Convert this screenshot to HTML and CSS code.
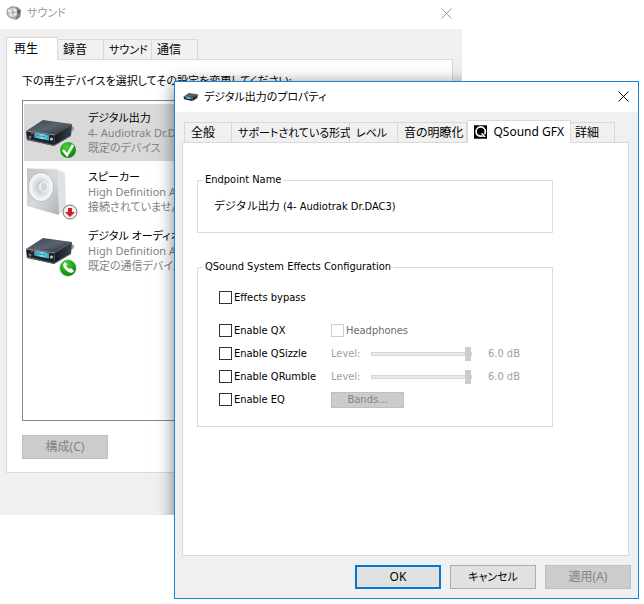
FILE: index.html
```
<!DOCTYPE html>
<html lang="ja">
<head>
<meta charset="UTF-8">
<title>サウンド</title>
<link rel="stylesheet" href="styles.css">
</head>
<body>
<svg class="defs" aria-hidden="true">
    <defs>
        <linearGradient id="top" x1="0" y1="0" x2="1" y2="1">
            <stop offset="0" stop-color="#3a424c"/>
            <stop offset=".5" stop-color="#59636e"/>
            <stop offset="1" stop-color="#252b33"/>
        </linearGradient>
        <linearGradient id="side" x1="0" y1="0" x2="1" y2="0">
            <stop offset="0" stop-color="#11161d"/>
            <stop offset="1" stop-color="#39424d"/>
        </linearGradient>
        <linearGradient id="lcd" x1="0" y1="0" x2="1" y2="0">
            <stop offset="0" stop-color="#2b8fae"/>
            <stop offset=".5" stop-color="#7fe3ee"/>
            <stop offset="1" stop-color="#2da6bd"/>
        </linearGradient>
        <radialGradient id="green" cx=".4" cy=".3" r=".8">
            <stop offset="0" stop-color="#4fd03c"/>
            <stop offset=".6" stop-color="#1b9c18"/>
            <stop offset="1" stop-color="#0b6d0c"/>
        </radialGradient>
        <linearGradient id="box" x1="0" y1="0" x2="1" y2="1">
            <stop offset="0" stop-color="#c0c6cb"/>
            <stop offset=".5" stop-color="#d6dadd"/>
            <stop offset="1" stop-color="#adb3b8"/>
        </linearGradient>
        <radialGradient id="cone">
            <stop offset="0" stop-color="#ffffff"/>
            <stop offset=".35" stop-color="#c9cdd1"/>
            <stop offset="1" stop-color="#f2f3f5"/>
        </radialGradient>
    </defs>
    <symbol id="dac" viewBox="0 14 52 30">
        <path d="M47 22l3 1v3l-3 2z" fill="#9a9fa5"/>
        <path d="M2 27L19 16l29 4-17 11z" fill="url(#top)"/>
        <path d="M31 31l17-11-1 12-17 10z" fill="url(#side)"/>
        <path d="M2 27l29 4-1 11-27-6z" fill="#1c222b"/>
        <path d="M2 27l29 4" stroke="#8a949e" stroke-width=".8"/>
        <path d="M3 35l27 6.500M30 41.500L47 31.500" stroke="#737d88" stroke-width=".8" fill="none"/>
        <path d="M10 28.500l15 2.500v5.500L10 33.500z" fill="url(#lcd)"/>
        <path d="M13 31.500l8 1.300" stroke="#1e7c96" stroke-width=".8"/>
        <circle cx="8" cy="29" r="1.300" fill="#e02a20"/>
        <circle cx="6" cy="33" r="1.500" fill="#6f7984"/>
        <circle cx="27.500" cy="35" r="1.600" fill="#b8c0c8"/>
    </symbol>
</svg>

<div class="window sound">
    <header class="titlebar">
        <svg class="title-icon" viewBox="0 0 16 16" width="16" height="16">
            <path d="M1 4l5-3 6 1 3 4-1 6-5 3-6-3-2-4z" fill="#a9afb5"/>
            <path d="M10 2l5 3-1 7-4 3z" fill="#777e86"/>
            <circle cx="6.500" cy="7.500" r="5.500" fill="#c9ced3" stroke="#8c939a"/>
            <path d="M2 5l8 5M4 11l6-7" stroke="#eef0f2" stroke-width="1.500"/>
            <circle cx="7" cy="7.500" r="1.300" fill="#8b949d"/>
            <path d="M11 5l3 2-2 2z" fill="#3f4a58"/>
        </svg>
        <h1 class="title kana">サウンド</h1>
        <button class="close" aria-label="閉じる">
            <svg viewBox="0 0 11 11" width="11" height="11"><path d="M.5.5l10 10M10.500.5l-10 10" stroke="currentColor"/></svg>
        </button>
    </header>
    <div class="client">
        <div class="tabs" role="tablist">
            <button class="tab active" role="tab" aria-selected="true">再生</button>
            <button class="tab" role="tab">録音</button>
            <button class="tab kana" role="tab">サウンド</button>
            <button class="tab" role="tab">通信</button>
        </div>
        <div class="panel">
            <p class="hint kana">下の再生デバイスを選択してその設定を変更してください:</p>
            <ul class="devices">
                <li class="device selected">
                    <svg class="device-icon" viewBox="0 0 54 57" width="54" height="57">
                        <use href="#dac" x="0" y="14" width="52" height="30"/>
                        <circle cx="44" cy="46" r="8.500" fill="url(#green)" stroke="#dfe8df"/>
                        <path d="M39 46l4 5 6-10" fill="none" stroke="#fff" stroke-width="2.600"/>
                    </svg>
                    <div class="device-text kana">
                        <strong>デジタル出力</strong>
                        <span>4- Audiotrak Dr.DAC3</span>
                        <span>既定のデバイス</span>
                    </div>
                </li>
                <li class="device">
                    <svg class="device-icon" viewBox="0 0 54 57" width="54" height="57">
                        <path d="M33 7l8 3 1 35-8 7z" fill="#dfe2e5"/>
                        <path d="M3 5l30 1 2 46L3 43z" fill="url(#box)"/>
                        <path d="M3 5l30 1 8 4" fill="none" stroke="#f3f4f5"/>
                        <ellipse cx="17" cy="24" rx="13" ry="15" fill="#b9bec3"/>
                        <ellipse cx="17" cy="24" rx="12" ry="14" fill="#f3f4f5"/>
                        <ellipse cx="17" cy="24" rx="10" ry="12" fill="url(#cone)"/>
                        <ellipse cx="20" cy="24" rx="4" ry="5" fill="#d2d6da" stroke="#fff"/>
                        <circle cx="46" cy="49" r="7" fill="#eee" stroke="#777"/>
                        <path d="M44 45h4v4h3l-5 5-5-5h3z" fill="#cc2027"/>
                    </svg>
                    <div class="device-text kana">
                        <strong>スピーカー</strong>
                        <span>High Definition Audio Device</span>
                        <span>接続されていません</span>
                    </div>
                </li>
                <li class="device">
                    <svg class="device-icon" viewBox="0 0 54 57" width="54" height="57">
                        <use href="#dac" x="0" y="14" width="52" height="30"/>
                        <circle cx="44" cy="46" r="8.500" fill="url(#green)" stroke="#dfe8df"/>
                        <path d="M40 41c-2 2 0 5 2 7s5 4 7 2l1-1-3-3-2 1-3-3 1-2-2-2z" fill="#fff"/>
                    </svg>
                    <div class="device-text kana">
                        <strong>デジタル オーディオ (S/PDIF)</strong>
                        <span>High Definition Audio Device</span>
                        <span>既定の通信デバイス</span>
                    </div>
                </li>
            </ul>
            <button class="button" disabled>構成(C)</button>
        </div>
    </div>
</div>

<div class="window props">
    <header class="titlebar">
        <svg class="title-icon" viewBox="0 14 52 30" width="16" height="16"><use href="#dac" x="0" y="14" width="52" height="30"/></svg>
        <h1 class="title kana">デジタル出力のプロパティ</h1>
        <button class="close" aria-label="閉じる">
            <svg viewBox="0 0 11 11" width="11" height="11"><path d="M.5.5l10 10M10.500.5l-10 10" stroke="currentColor"/></svg>
        </button>
    </header>
    <div class="client">
        <div class="tabs" role="tablist">
            <button class="tab" role="tab">全般</button>
            <button class="tab kana" role="tab">サポートされている形式</button>
            <button class="tab kana" role="tab">レベル</button>
            <button class="tab" role="tab">音の明瞭化</button>
            <button class="tab active" role="tab" aria-selected="true">
                <svg class="q-icon" viewBox="0 0 16 16" width="16" height="16">
                    <rect width="16" height="16"/>
                    <circle cx="8" cy="7.500" r="5.500" fill="none" stroke="#fff" stroke-width="2"/>
                    <path d="M8 9l6 5" stroke="#000" stroke-width="3"/>
                    <path d="M8 9.500h2.500l3.500 4.500h-2.500z" fill="#fff"/>
                </svg>
                QSound GFX
            </button>
            <button class="tab" role="tab">詳細</button>
        </div>
        <div class="panel">
            <fieldset class="group">
                <legend>Endpoint Name</legend>
                <p class="endpoint">デジタル出力 (4- Audiotrak Dr.DAC3)</p>
            </fieldset>
            <fieldset class="group">
                <legend>QSound System Effects Configuration</legend>
                <div class="effect bypass">
                    <label class="check"><input type="checkbox">Effects bypass</label>
                </div>
                <div class="effect">
                    <label class="check"><input type="checkbox">Enable QX</label>
                    <label class="check off"><input type="checkbox" disabled>Headphones</label>
                </div>
                <div class="effect">
                    <label class="check"><input type="checkbox">Enable QSizzle</label>
                    <div class="level">
                        <label for="sizzle">Level:</label>
                        <input id="sizzle" type="range" min="0" max="6" value="6" disabled>
                        <output for="sizzle">6.0 dB</output>
                    </div>
                </div>
                <div class="effect">
                    <label class="check"><input type="checkbox">Enable QRumble</label>
                    <div class="level">
                        <label for="rumble">Level:</label>
                        <input id="rumble" type="range" min="0" max="6" value="6" disabled>
                        <output for="rumble">6.0 dB</output>
                    </div>
                </div>
                <div class="effect">
                    <label class="check"><input type="checkbox">Enable EQ</label>
                    <button class="button bands" disabled>Bands...</button>
                </div>
            </fieldset>
        </div>
        <footer class="actions">
            <button class="button default">OK</button>
            <button class="button kana">キャンセル</button>
            <button class="button" disabled>適用(A)</button>
        </footer>
    </div>
</div>
</body>
</html>
```
FILE: styles.css
```
* {
  box-sizing: border-box;
}

body {
  margin: 0;
  min-height: 100vh;
  background: #fff;
  color: #000;
  font: 12px/16px "Noto Sans", "Noto Sans CJK JP", sans-serif;
  font-feature-settings: "palt";
}

button, input {
  font: inherit;
  font-feature-settings: inherit;
  color: inherit;
  margin: 0;
}

.defs {
  position: absolute;
  width: 0;
  height: 0;
}

/* windows on the desktop */
.window {
  position: absolute;
  background: #f0f0f0;
}

.sound {
  top: 0;
  left: 0;
  right: 182px;
  overflow: hidden;
}

/* shadow the front window casts on this one */
.sound::after {
  content: "";
  position: absolute;
  top: 84px;
  left: 174px;
  width: 464px;
  height: 514px;
  box-shadow: 0 0 16px rgba(0, 0, 0, 0.5);
}

.props {
  top: 81px;
  left: 174px;
  right: 5px;
  border: 1px solid #1883d7;
}

.titlebar {
  display: flex;
  align-items: center;
  height: 30px;
  padding: 0 9px 1px 8px;
  background: #fff;
}

.sound .titlebar {
  height: 29px;
  padding: 0 10px 3px 6px;
  color: #999;
}

.title-icon {
  margin-right: 5px;
}

.title {
  flex: 1;
  margin: 0;
  font-size: 12px;
  font-weight: normal;
}

.kana {
  font-size: 11px;
}

.close {
  display: flex;
  padding: 0;
  border: 0;
  background: none;
}

.client {
  padding: 8px 9px 9px 7px;
}

.sound .client {
  padding: 8px 9px 42px 6px;
}

.tabs {
  display: flex;
  align-items: flex-end;
  padding-left: 2px;
}

.sound .tabs {
  padding-left: 0;
}

.tab {
  height: 20px;
  padding: 0 6px;
  border: 1px solid #d9d9d9;
  border-width: 1px 1px 0 0;
  background: #f0f0f0;
  text-align: left;
  white-space: nowrap;
}

.tab:first-child {
  border-left-width: 1px;
}

.tab.active {
  position: relative;
  display: flex;
  align-items: center;
  height: 23px;
  margin-bottom: -1px;
  border-left-width: 1px;
  background: #fff;
}

.sound .tab {
  width: 46px;
  padding: 0 5px;
}

.sound .tab.active {
  width: 52px;
  padding: 0 7px;
}

.sound .tab:nth-child(3) {
  width: 48px;
}

.props .tab:nth-child(1) {
  width: 48px;
}

.props .tab:nth-child(2) {
  width: 118px;
}

.props .tab:nth-child(3) {
  width: 48px;
}

.props .tab:nth-child(4) {
  width: 69px;
}

.props .tab:nth-child(5) {
  width: 104px;
}

.props .tab:nth-child(6) {
  width: 44px;
  padding: 0 4px;
}

.q-icon {
  margin-right: 6px;
}

.panel {
  padding: 29px 75px 128px 14px;
  border: 1px solid #d9d9d9;
  background: #fff;
}

.sound .panel {
  padding: 13px 15px;
}

.hint {
  margin: 0 0 11px;
  white-space: nowrap;
}

.devices {
  height: 321px;
  margin: 0 0 14px;
  padding: 3px 1px;
  border: 1px solid #828790;
  list-style: none;
}

.device {
  display: flex;
  height: 57px;
  margin-bottom: 2px;
  white-space: nowrap;
}

.device.selected {
  background: #d9d9d9;
}

.device-icon {
  flex: none;
  margin-right: 10px;
}

.device-text {
  display: flex;
  flex-direction: column;
  padding-top: 6px;
  line-height: 15px;
  color: #838383;
}

.device-text strong {
  font-weight: normal;
  color: #000;
}

.button {
  width: 86px;
  height: 24px;
  padding: 0;
  border: 1px solid #adadad;
  background: #e1e1e1;
}

.button:disabled {
  border-color: #bfbfbf;
  background: #ccc;
  color: #838383;
}

.button.default {
  border: 2px solid #0078d7;
}

.group {
  margin: 0 0 26px;
  padding: 11px 16px 17px;
  min-width: 0;
  border: 1px solid #dcdcdc;
  font: 11px/16px "DejaVu Sans Condensed", "Noto Sans CJK JP", sans-serif;
}

.group:last-child {
  margin: 0;
  padding: 11px 21px 15px;
}

.group legend {
  margin-left: -11px;
  padding: 0 2px;
}

.group:last-child legend {
  margin-left: -16px;
}

.endpoint {
  margin: 0;
}

.effect {
  display: grid;
  grid-template-columns: 112px 1fr;
  align-items: center;
  height: 23px;
}

.effect.bypass {
  margin-bottom: 10px;
}

.check {
  display: flex;
  align-items: center;
  gap: 2px;
  white-space: nowrap;
}

.check input {
  appearance: none;
  width: 13px;
  height: 13px;
  border: 1px solid #333;
  background: #fff;
}

.check input:checked {
  background: #333;
}

.off {
  color: #6d6d6d;
}

.off input {
  border-color: #ccc;
}

.level {
  display: flex;
  align-items: center;
  color: #a0a0a0;
}

.level label {
  width: 40px;
}

.level input {
  appearance: none;
  width: 101px;
  height: 14px;
  margin-right: 16px;
  background: none;
}

.level input::-webkit-slider-runnable-track {
  height: 4px;
  border: 1px solid #d6d6d6;
  background: #e7eaea;
}

.level input::-webkit-slider-thumb {
  appearance: none;
  width: 6px;
  height: 14px;
  margin-top: -6px;
  background: #ccc;
}

.bands {
  width: 73px;
  height: 16px;
  line-height: 14px;
}

.actions {
  display: flex;
  justify-content: flex-end;
  gap: 9px;
  margin: 9px -2px 0 0;
}
```
